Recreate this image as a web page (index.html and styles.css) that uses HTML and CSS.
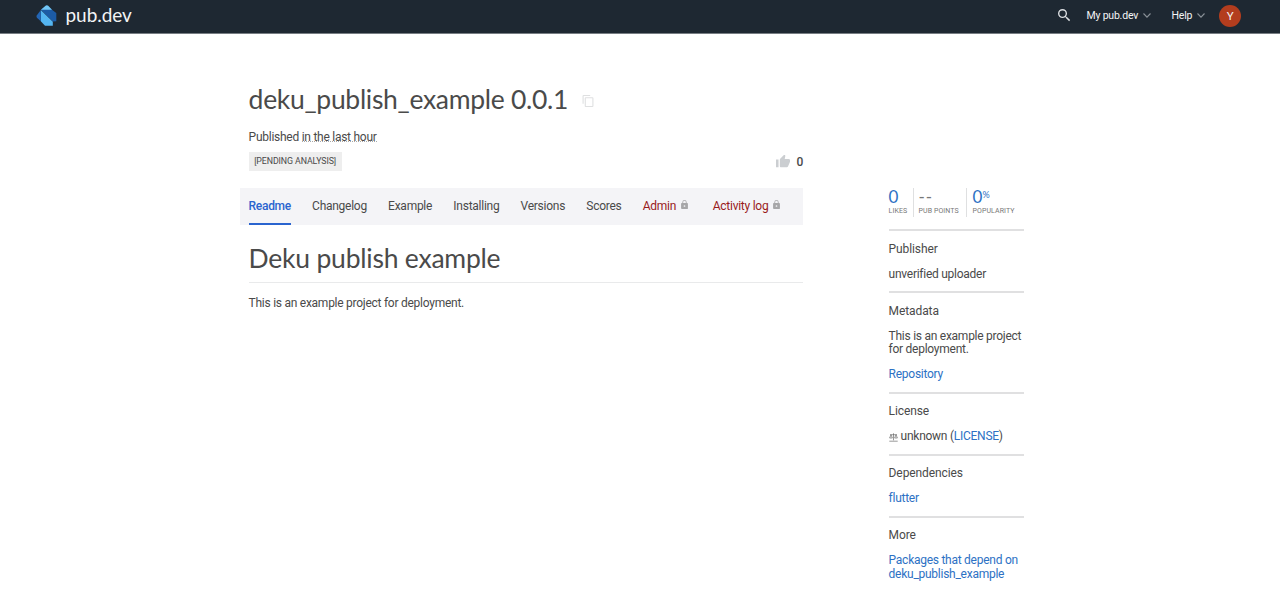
FILE: index.html
```html
<!DOCTYPE html>
<html lang="en">
<head>
<meta charset="utf-8">
<title>deku_publish_example | Flutter Package</title>
<link rel="stylesheet" href="styles.css">
</head>
<body>
<header class="site-header">
  <a class="logo">
    <svg class="logo-mark" viewBox="0 0 21 21">
      <path fill="#1c5ba6" d="M5.2 4.2 11 .4 15.6 4.6 20.3 8v8.2l-3.5.2L5 5z"/>
      <path fill="#72c6f5" d="M5 4.7 9.5.8q1.4-.9 2.7 0L16 4.7z"/>
      <path fill="#54b5f1" d="M4.8 4.9 16.8 16.7V20.8H9L4.8 16.2z"/>
      <path fill="#2365b4" d="M4.8 5v11.2L.9 12.7q-.8-1.1-.2-2.2z"/>
    </svg>
    <span class="logo-text">pub.dev</span>
  </a>
  <nav class="site-nav">
    <svg class="search-icon" viewBox="3 3 18 18"><path fill="#dadde0" d="M15.5 14h-.79l-.28-.27A6.47 6.47 0 0 0 16 9.5 6.5 6.5 0 1 0 9.5 16c1.61 0 3.09-.59 4.23-1.57l.27.28v.79l5 4.99L20.49 19l-4.99-5zm-6 0a4.5 4.5 0 1 1 0-9 4.5 4.5 0 0 1 0 9z"/></svg>
    <span class="nav-item nav-account">My pub.dev<svg class="chevron" viewBox="0 0 8 5"><path d="M.5.5 4 4.2 7.5.5"/></svg></span>
    <span class="nav-item nav-help">Help<svg class="chevron" viewBox="0 0 8 5"><path d="M.5.5 4 4.2 7.5.5"/></svg></span>
    <span class="avatar">Y</span>
  </nav>
</header>
<main class="page">
  <section class="package">
    <div class="package-head">
      <h1 class="title"><span>deku_publish_example 0.0.1</span><svg class="copy-icon" viewBox="1 0 22 24"><path fill="#dfe0e1" d="M16 1H4a2 2 0 0 0-2 2v14h2V3h12V1zm4 4H8a2 2 0 0 0-2 2v14c0 1.1.9 2 2 2h12a2 2 0 0 0 2-2V7a2 2 0 0 0-2-2zm0 16H8V7h12v14z"/></svg></h1>
      <p class="published">Published <span class="ago">in the last hour</span></p>
      <div class="tag-row">
        <span class="tag">[PENDING ANALYSIS]</span>
        <span class="likes"><svg class="thumb" viewBox="1 2 22 20"><path fill="#cbced1" d="M1 21h4V9H1v12zm22-11a2 2 0 0 0-2-2h-6.31l.95-4.57.03-.32c0-.41-.17-.79-.44-1.06L14.17 1 7.59 7.59C7.22 7.95 7 8.45 7 9v10c0 1.1.9 2 2 2h9c.83 0 1.54-.5 1.84-1.22l3.02-7.05c.09-.23.14-.47.14-.73v-2z"/></svg>0</span>
      </div>
    </div>
    <ul class="tabs">
      <li class="tab active">Readme</li>
      <li class="tab">Changelog</li>
      <li class="tab">Example</li>
      <li class="tab">Installing</li>
      <li class="tab">Versions</li>
      <li class="tab">Scores</li>
      <li class="tab admin">Admin<svg class="lock" viewBox="4 1 16 21"><path d="M18 8h-1V6A5 5 0 0 0 7 6v2H6a2 2 0 0 0-2 2v10c0 1.1.9 2 2 2h12a2 2 0 0 0 2-2V10a2 2 0 0 0-2-2zm-6 9a2 2 0 1 1 0-4 2 2 0 0 1 0 4zm3.1-9H8.9V6a3.1 3.1 0 0 1 6.2 0z"/></svg></li>
      <li class="tab admin">Activity log<svg class="lock" viewBox="4 1 16 21"><path d="M18 8h-1V6A5 5 0 0 0 7 6v2H6a2 2 0 0 0-2 2v10c0 1.1.9 2 2 2h12a2 2 0 0 0 2-2V10a2 2 0 0 0-2-2zm-6 9a2 2 0 1 1 0-4 2 2 0 0 1 0 4zm3.1-9H8.9V6a3.1 3.1 0 0 1 6.2 0z"/></svg></li>
    </ul>
    <article class="readme">
      <h2 class="readme-title">Deku publish example</h2>
      <p class="readme-text">This is an example project for deployment.</p>
    </article>
  </section>
  <aside class="sidebar">
    <div class="scores">
      <div class="score likes-score"><span class="value">0</span><span class="label">LIKES</span></div>
      <div class="score points"><span class="value none">--</span><span class="label">PUB POINTS</span></div>
      <div class="score"><span class="value">0<span class="percent">%</span></span><span class="label">POPULARITY</span></div>
    </div>
    <section class="info"><h3 class="info-title">Publisher</h3><p class="info-text">unverified uploader</p></section>
    <section class="info"><h3 class="info-title">Metadata</h3><p class="info-text">This is an example project<br>for deployment.</p><p class="info-text"><a class="link">Repository</a></p></section>
    <section class="info"><h3 class="info-title">License</h3><p class="info-text"><svg class="scale" viewBox="0 0 9 9"><path d="M4.5.3v7M1 1.7h7M2 1.8.6 5h2.8L2 1.8zM7 1.8 5.6 5h2.8L7 1.8zM.3 8.2h8.4"/></svg>unknown (<a class="link">LICENSE</a>)</p></section>
    <section class="info"><h3 class="info-title">Dependencies</h3><p class="info-text"><a class="link">flutter</a></p></section>
    <section class="info"><h3 class="info-title">More</h3><p class="info-text"><a class="link">Packages that depend on<br>deku_publish_example</a></p></section>
  </aside>
</main>
</body>
</html>
```
FILE: styles.css
```css
* { box-sizing: border-box; }
body { margin: 0; height: 610px; overflow: hidden; background: #fff; color: #4a4a4a; font: 12px/14px Roboto, sans-serif; letter-spacing: -.26px; }
h1, h2, h3, p, ul { margin: 0; padding: 0; font-weight: 400; }
svg { flex: none; }
.site-header { height: 34px; padding: 0 39px 2px 36px; background: #1e2832; border-bottom: 1px solid #777d83; display: flex; justify-content: space-between; align-items: center; color: #f3f4f5; }
.logo { display: flex; align-items: center; }
.logo-mark { width: 21px; height: 21px; }
.logo-text { margin: -1px 0 0 8.5px; font: 19px/22px Lato, sans-serif; letter-spacing: -.05px; }
.site-nav { display: flex; align-items: center; font-size: 10.5px; letter-spacing: -.2px; }
.search-icon { width: 12.5px; height: 12.5px; margin-right: 16px; }
.nav-item { display: flex; align-items: center; justify-content: space-between; }
.nav-account { width: 64px; margin-right: 21px; }
.nav-help { width: 33.5px; margin-right: 14px; }
.chevron { width: 8px; height: 5px; }
.chevron path { fill: none; stroke: #8a9198; stroke-width: 1.1; }
.avatar { width: 22px; height: 22px; border-radius: 50%; background: #b33d1e; font-size: 11.5px; line-height: 22px; text-align: center; }
.page { display: flex; padding-left: 240px; }
.package { width: 563px; }
.package-head { height: 154px; padding: 49px 0 0 8.6px; }
.title { display: flex; align-items: center; height: 32px; font: 26.5px/32px Lato, sans-serif; letter-spacing: -.3px; }
.title span { width: 319px; white-space: nowrap; }
.copy-icon { width: 12px; height: 14px; margin: 3px 0 0 14.5px; }
.published { margin-top: 15px; }
.ago { display: inline-block; height: 12px; line-height: 14px; vertical-align: top; border-bottom: 1px dotted #aaa; }
.tag-row { display: flex; justify-content: space-between; align-items: center; margin-top: 8px; height: 19px; }
.tag { width: 93px; height: 19px; background: #eee; font-size: 8.8px; line-height: 19px; text-align: center; letter-spacing: -.1px; }
.likes { display: flex; align-items: center; font-weight: 500; }
.thumb { width: 14px; height: 13px; margin-right: 6px; }
.tabs { display: flex; height: 37px; padding-left: 8.6px; background: #f4f4f7; list-style: none; gap: 21.2px; line-height: 36px; }
.tab { white-space: nowrap; }
.active { color: #2a64cf; font-weight: 500; letter-spacing: -.3px; border-bottom: 2px solid #2a64cf; }
.admin { display: flex; color: #991b1b; }
.admin + .admin { margin-left: 3.5px; }
.lock { width: 7px; height: 9px; margin: 12px 0 0 5px; }
.lock path { fill: #a6a6a8; }
.readme { padding-left: 8.6px; }
.readme-title { height: 58px; padding-top: 17px; border-bottom: 1px solid #e9eaeb; font: 26.5px/32px Lato, sans-serif; letter-spacing: -.22px; }
.readme-text { margin-top: 13px; }
.sidebar { width: 135.4px; margin: 154px 0 0 85.6px; }
.scores { display: flex; height: 29px; margin-bottom: 12px; }
.score { display: flex; flex-direction: column; }
.likes-score { width: 24px; }
.points { width: 54px; border: solid #dfe0e1; border-width: 0 1px; margin-right: 6px; padding: 0 5px; }
.value { height: 19px; color: #2d71c4; font: 17px/18px Lato, sans-serif; display: flex; letter-spacing: 0; }
.none { color: #777; letter-spacing: .8px; }
.percent { font-size: 9px; line-height: 14px; }
.label { font-size: 7px; line-height: 8px; color: #777; white-space: nowrap; letter-spacing: .08px; }
.info { border-top: 2px solid #e0e0e1; padding: 10.5px 0 10px; }
.info-title { font-size: 12px; line-height: 14px; margin-bottom: 12px; letter-spacing: -.1px; }
.info-text { line-height: 13.5px; white-space: nowrap; }
.info-text + .info-text { margin-top: 11.5px; }
.link { color: #2d71c4; }
.scale { width: 9px; height: 9px; vertical-align: -2px; margin-right: 3px; }
.scale path { fill: none; stroke: #555; stroke-width: .6; }
```
